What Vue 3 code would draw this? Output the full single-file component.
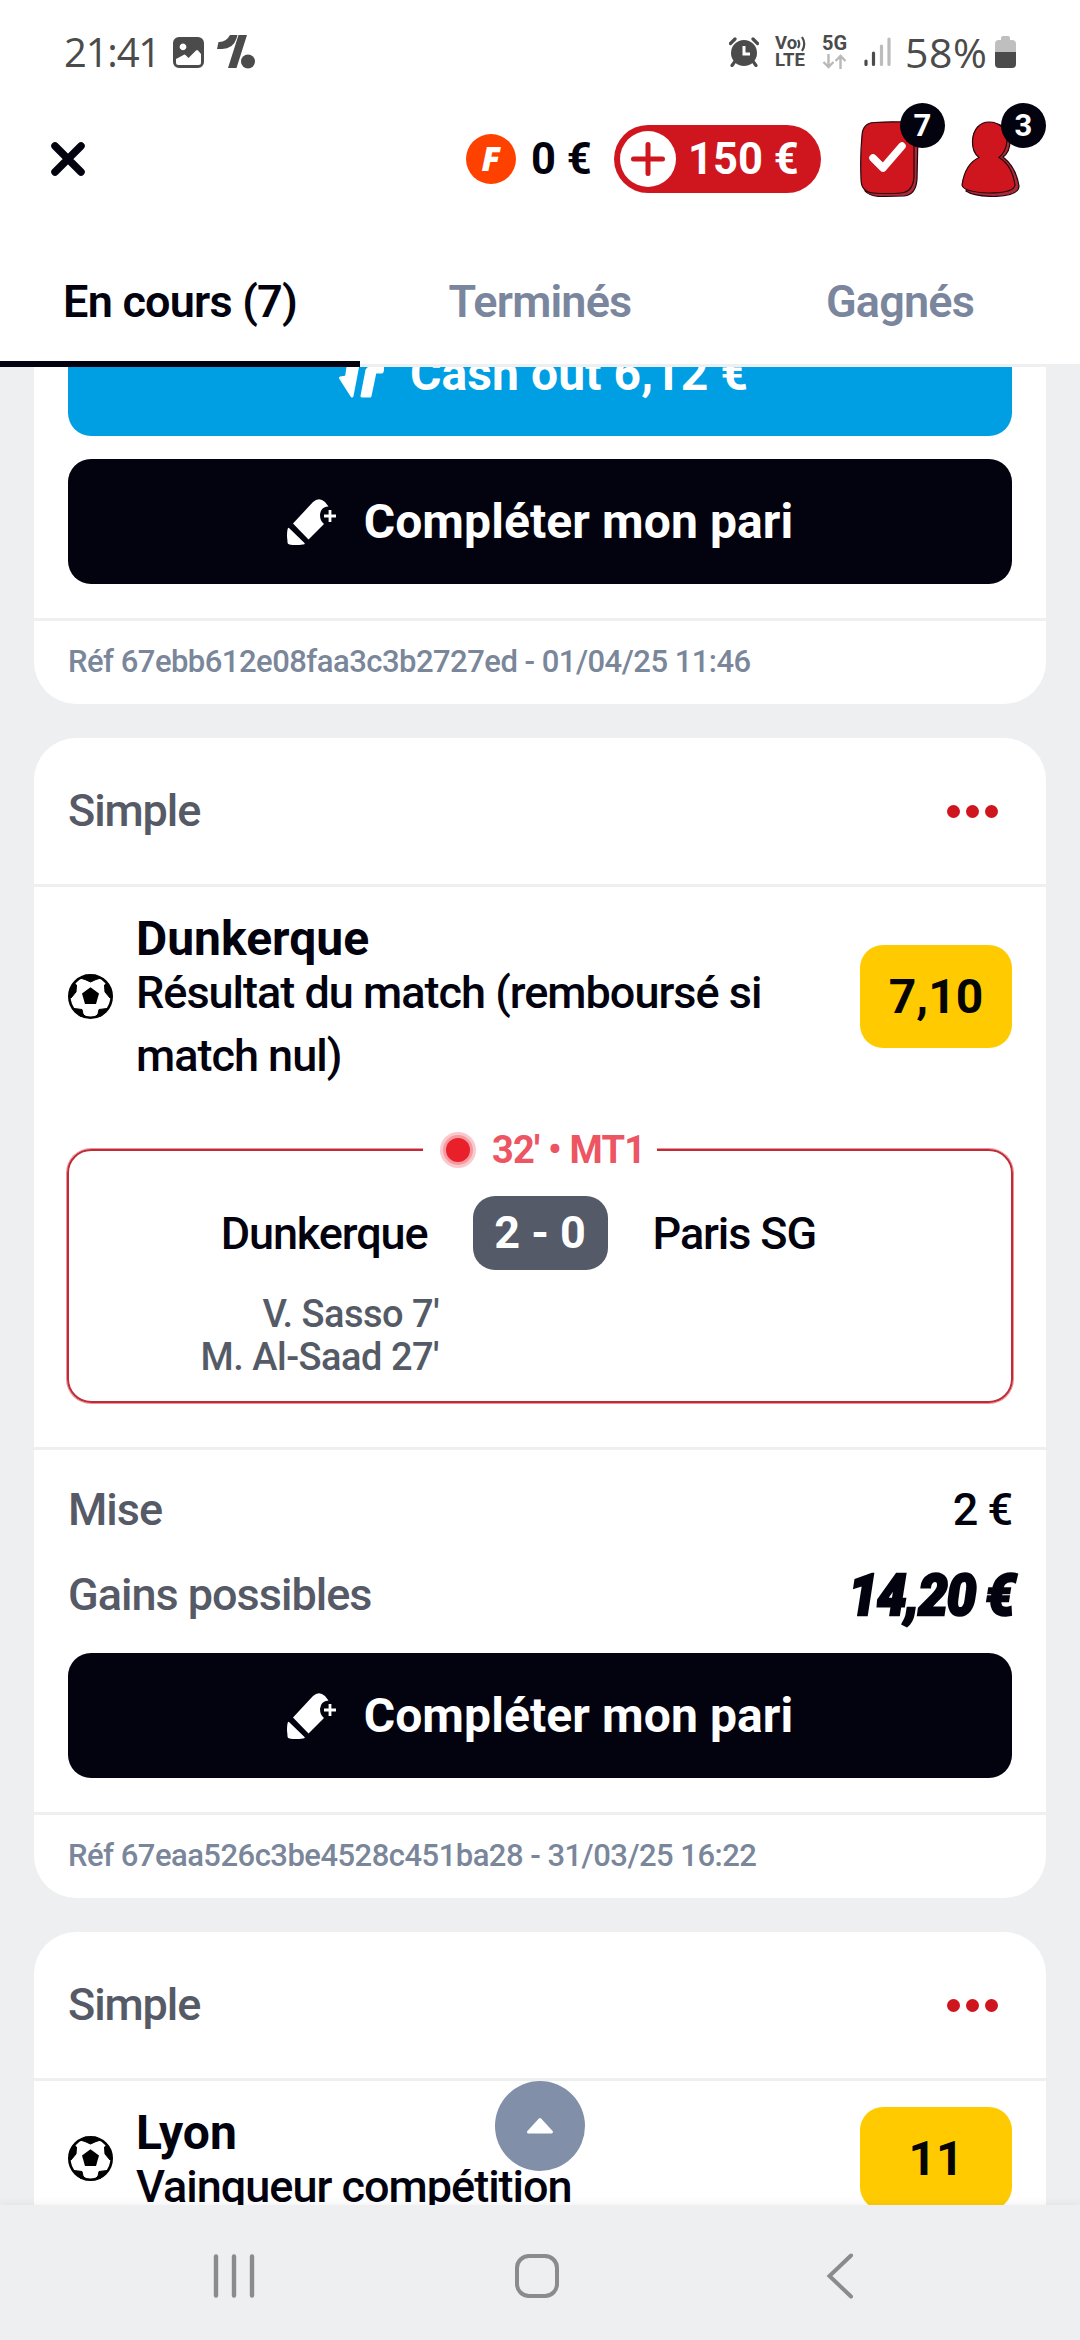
<script setup>
const tabs = [
  { label: 'En cours (7)', active: true },
  { label: 'Terminés', active: false },
  { label: 'Gagnés', active: false }
]

const bets = [
  {
    id: 1,
    tail: true,
    cashOut: 'Cash out 6,12 €',
    ref: 'Réf 67ebb612e08faa3c3b2727ed - 01/04/25 11:46'
  },
  {
    id: 2,
    type: 'Simple',
    pick: 'Dunkerque',
    market: 'Résultat du match (remboursé si match nul)',
    odds: '7,10',
    live: {
      clock: "32' • MT1",
      home: 'Dunkerque',
      away: 'Paris SG',
      score: '2 - 0',
      scorers: ["V. Sasso 7'", "M. Al-Saad 27'"]
    },
    stake: '2 €',
    gain: '14,20 €',
    ref: 'Réf 67eaa526c3be4528c451ba28 - 31/03/25 16:22'
  },
  {
    id: 3,
    type: 'Simple',
    pick: 'Lyon',
    market: 'Vainqueur compétition',
    odds: '11'
  }
]
</script>

<template>
  <div class="screen">
    <div class="status">
      <span class="time">21:41</span>
      <svg class="s-photo" width="31" height="31" viewBox="0 0 31 31">
        <path fill="#4b4b4b" fill-rule="evenodd" d="M6 0h19a6 6 0 0 1 6 6v19a6 6 0 0 1-6 6H6a6 6 0 0 1-6-6V6a6 6 0 0 1 6-6ZM10 6.500a3.400 3.400 0 1 0 .01 0ZM3 22v3.500Q3 28 5.500 28h20q2.500 0 2.500-2.500V17l-3-3.400q-1-1-2 0L15.500 21l-3-3q-1-1-2 0Z" />
      </svg>
      <svg class="s-logo" width="38" height="34" viewBox="0 0 38 34">
        <path fill="#4b4b4b" d="M0 14 1.500 7Q9 7.500 13 0h7.500l-1 3.500Q16 14 5 14ZM21.500 0H30L19.500 33H11Z" />
        <circle cx="31" cy="26.500" r="7" fill="#4b4b4b" />
      </svg>
      <span class="spacer"></span>
      <svg class="s-alarm" width="30" height="30" viewBox="0 0 30 30">
        <circle cx="15" cy="16" r="13" fill="#4b4b4b" />
        <path d="M1.500 6.500 6 2M28.500 6.500 24 2M5.500 25 3 28.500M24.500 25l2.500 3.500" stroke="#4b4b4b" stroke-width="3.200" stroke-linecap="round" />
        <path d="M15 9v8h6" fill="none" stroke="#fff" stroke-width="3" />
      </svg>
      <div class="volte">
        <span>Vo<svg width="11" height="16" viewBox="0 0 11 16"><path d="M1 4q2.500 4 0 8M5 1q4.500 7 0 14" fill="none" stroke="#4b4b4b" stroke-width="2.200" /></svg></span>
        <span>LTE</span>
      </div>
      <div class="fiveg">
        <span>5G</span>
        <svg width="25" height="15" viewBox="0 0 25 15">
          <path d="M6.500 0v13M1.500 8l5 5 5-5M18.500 15V2M13.500 7l5-5 5 5" fill="none" stroke="#b9b9b9" stroke-width="2.400" />
        </svg>
      </div>
      <svg class="s-signal" width="27" height="30" viewBox="0 0 27 30">
        <g stroke-width="3.200" stroke-linecap="round">
          <path d="M2 24v3.500M9.500 16v11.500" stroke="#4b4b4b" />
          <path d="M17.500 9v18.500M25 2v25.500" stroke="#bcbcbc" />
        </g>
      </svg>
      <span class="pct">58%</span>
      <svg class="s-batt" width="21" height="32" viewBox="0 0 21 32">
        <path fill="#bfbfbf" d="M8 0h5q2 0 2 2v2h2q4 0 4 4v9H0V8q0-4 4-4h2V2q0-2 2-2Z" />
        <path fill="#4b4b4b" d="M0 16h21v12q0 4-4 4H4q-4 0-4-4Z" />
      </svg>
    </div>

    <header class="header">
      <svg width="34" height="34" viewBox="0 0 34 34">
        <path d="M4 4l26 26M30 4 4 30" stroke="#03030f" stroke-width="7.500" stroke-linecap="round" />
      </svg>
      <span class="spacer"></span>
      <span class="freebet">F</span>
      <span class="free-amount">0 €</span>
      <div class="wallet">
        <span class="plus">
          <svg width="34" height="34" viewBox="0 0 34 34">
            <path d="M17 2.500v29M2.500 17h29" stroke="#cf161e" stroke-width="5" stroke-linecap="round" />
          </svg>
        </span>
        <span>150 €</span>
      </div>
      <div class="hicon bets">
        <svg width="59" height="76" viewBox="0 0 59 76">
          <path d="M12 2 43 1Q58 1 58 14L57 58Q56 74 44 75L20 75.500Q9 75 5 70Z" fill="#a92a38" stroke="#25060c" stroke-width="1.200" />
          <path d="M14 1.500Q28 .5 42 1 54 2 54 14V56Q53 71 41 72 27 73 13 72 1 71 1 58 0 36 2 14 3 2 14 1.500Z" fill="#cf161e" stroke="#25060c" stroke-width="1.200" />
          <path d="M13 37l10 10 19-22" fill="none" stroke="#fff" stroke-width="7.500" stroke-linecap="round" stroke-linejoin="round" />
        </svg>
        <span class="badge">7</span>
      </div>
      <div class="hicon person">
        <svg width="59" height="76" viewBox="0 0 59 76">
          <path d="M33 2Q49 5 49 20 49 31 42 36 55 46 58 65 58 75 32 75.500 12 75 5 70Z" fill="#a92a38" stroke="#25060c" stroke-width="1.200" />
          <path d="M28 1C39 1 46 9 46 20Q45 31 38 36.500 51 44 54 64 53 72 28 72 2 71 1 64 4 43 18 36.500 11 31 11.500 20C12 8 19 1 28 1Z" fill="#cf161e" stroke="#25060c" stroke-width="1.200" />
        </svg>
        <span class="badge">3</span>
      </div>
    </header>

    <nav class="tabs">
      <span v-for="t in tabs" :key="t.label" class="tab" :class="{ active: t.active }">{{ t.label }}</span>
    </nav>

    <main class="list">
      <section v-for="b in bets" :key="b.id" class="card" :class="{ tail: b.tail }">
        <div v-if="b.type" class="card-head">
          <span>{{ b.type }}</span>
          <span class="dots"><i></i><i></i><i></i></span>
        </div>

        <div v-if="b.pick" class="selection">
          <svg class="ball" width="45" height="45" viewBox="0 0 45 45">
            <circle cx="22.500" cy="22.500" r="21.200" fill="#fff" stroke="#000" stroke-width="2.600" />
            <path d="M22.500 13.200 31 19.500 28 30H17l-3-10.500Z" />
            <path d="M12 4 17 5.500 22.500 8 28 5.500 33 4 28 1H17ZM6 9.500 8.500 11 8 18 3 24 1 22ZM39 9.500 36.500 11 37 18 42 24 44 22ZM6 34.500 14 35.500 15 40 18.500 43.500 12 42ZM39 34.500 31 35.500 30 40 26.500 43.500 33 42Z" stroke="#000" stroke-linejoin="round" />
          </svg>
          <div class="sel-text">
            <strong>{{ b.pick }}</strong>
            <p>{{ b.market }}</p>
          </div>
          <span class="odds">{{ b.odds }}</span>
        </div>

        <div v-if="b.live" class="live">
          <div class="live-label"><i class="pulse"></i><span>{{ b.live.clock }}</span></div>
          <div class="teams">
            <span class="home">{{ b.live.home }}</span>
            <span class="score">{{ b.live.score }}</span>
            <span>{{ b.live.away }}</span>
          </div>
          <div class="scorers">
            <span v-for="s in b.live.scorers" :key="s">{{ s }}</span>
          </div>
        </div>

        <div v-if="b.stake" class="money">
          <div class="row"><span class="label">Mise</span><span>{{ b.stake }}</span></div>
          <div class="row"><span class="label">Gains possibles</span><span class="gain">{{ b.gain }}</span></div>
        </div>

        <div v-if="b.ref" class="actions">
          <button v-if="b.cashOut" class="btn cash">
            <svg width="45" height="48" viewBox="1 0 45 48">
              <path fill="#fff" stroke="#fff" stroke-width="3" stroke-linejoin="round" d="M12 4h10l-8 42L2.500 28l6-1ZM29 20 24 46h8l5-24h7l1-4H31Z" />
            </svg>
            <span>{{ b.cashOut }}</span>
          </button>
          <button class="btn">
            <svg width="49" height="46" viewBox="0 0 49 46">
              <path fill="#fff" d="M6 24.500 26 3Q32-2.500 38 3L41.500 7.500Q33.500 8 33 16 33 22 37 25L21.500 40.500ZM2 29 17.500 44Q18.500 45.500 16 45.500 8 46.500 2.500 45.500 0 45 .5 42-.5 36 .5 30.500 1 28 2 29Z" />
              <path d="M43 11v12M37 17h12" stroke="#fff" stroke-width="2.800" />
            </svg>
            <span>Compléter mon pari</span>
          </button>
        </div>
        <div v-if="b.ref" class="ref">{{ b.ref }}</div>
      </section>
    </main>

    <button class="to-top">
      <svg width="28" height="18" viewBox="0 0 28 18">
        <path d="M14 2.500 25.500 15h-23Z" fill="#fff" stroke="#fff" stroke-width="3" stroke-linejoin="round" />
      </svg>
    </button>

    <footer class="sysnav">
      <svg width="42" height="44" viewBox="0 0 42 44">
        <path d="M3 2.500v39M21 2.500v39M39 2.500v39" stroke="#8b8b8b" stroke-width="4.400" stroke-linecap="round" />
      </svg>
      <svg class="home-key" width="46" height="46" viewBox="0 0 46 46">
        <rect x="3" y="3" width="40" height="40" rx="12" fill="none" stroke="#8b8b8b" stroke-width="4" />
      </svg>
      <svg width="28" height="46" viewBox="0 0 28 46">
        <path d="M25 2.500 3.500 23 25 43.500" fill="none" stroke="#8b8b8b" stroke-width="4" stroke-linecap="round" />
      </svg>
    </footer>
  </div>
</template>

<style>
body {
  margin: 0;
  background: #edeff1;
}
</style>

<style scoped>
.screen {
  position: relative;
  display: flex;
  flex-direction: column;
  width: 1080px;
  height: 2340px;
  overflow: hidden;
  background: #edeff1;
  font-family: Roboto, 'Noto Sans', sans-serif;
  font-size: 45px;
  color: #03030f;
}
svg {
  display: block;
  flex: none;
}
.spacer {
  flex: 1;
}

/* Status bar */
.status {
  display: flex;
  align-items: center;
  box-sizing: border-box;
  height: 104px;
  padding: 0 64px;
  background: #fff;
  color: #4b4b4b;
}
.time {
  width: 109px;
  font: 400 40px/48px 'Open Sans', sans-serif;
  letter-spacing: -1.2px;
}
.s-logo {
  margin-left: 13px;
}
.volte {
  display: flex;
  flex-direction: column;
  width: 32px;
  margin-left: 16px;
  font-size: 18.5px;
  font-weight: 700;
  line-height: 17px;
}
.volte span {
  display: flex;
  align-items: center;
}
.fiveg {
  display: flex;
  flex-direction: column;
  gap: 2px;
  width: 26px;
  margin-left: 15px;
  font-size: 20px;
  font-weight: 700;
  line-height: 17px;
}
.s-signal {
  margin-left: 16px;
}
.pct {
  width: 90px;
  padding-left: 14px;
  font: 400 41px/48px 'Open Sans', sans-serif;
  letter-spacing: 0.6px;
}

/* App header */
.header {
  display: flex;
  align-items: center;
  box-sizing: border-box;
  height: 136px;
  padding: 0 61px 26px 51px;
  background: #fff;
  font-size: 43.5px;
  font-weight: 700;
}
.freebet {
  width: 50px;
  height: 50px;
  border-radius: 50%;
  background: #ff4100;
  color: #fff;
  font: italic 800 33px/50px 'Open Sans', sans-serif;
  text-align: center;
}
.free-amount {
  width: 61px;
  margin-left: 15px;
  white-space: nowrap;
}
.wallet {
  display: flex;
  align-items: center;
  gap: 12px;
  box-sizing: border-box;
  width: 207px;
  height: 68px;
  margin-left: 22px;
  padding-left: 6px;
  border-radius: 34px;
  background: #cf161e;
  color: #fff;
  white-space: nowrap;
}
.plus {
  display: flex;
  align-items: center;
  justify-content: center;
  width: 56px;
  height: 56px;
  border-radius: 50%;
  background: #fff;
}
.hicon {
  position: relative;
  width: 58px;
}
.bets {
  margin-left: 39px;
}
.person {
  margin-left: 43px;
}
.badge {
  position: absolute;
  top: -18px;
  right: -27px;
  width: 45px;
  height: 45px;
  border-radius: 50%;
  background: #03030f;
  color: #fff;
  font-size: 31px;
  line-height: 45px;
  text-align: center;
}

/* Tabs */
.tabs {
  display: flex;
  height: 127px;
  background: #fff;
  box-shadow: inset 0 -3px #edeff1;
}
.tab {
  flex: 1;
  box-sizing: border-box;
  color: #7a869e;
  font-weight: 600;
  line-height: 124px;
  letter-spacing: -0.8px;
  text-align: center;
}
.tab.active {
  border-bottom: 6px solid #03030f;
  color: #03030f;
}

/* Bet list */
.list {
  display: flex;
  flex: 1;
  flex-direction: column;
  gap: 34px;
  min-height: 0;
  overflow: hidden;
  padding: 0 34px;
}
.card {
  flex: none;
  border-radius: 42px;
  background: #fff;
}
.card.tail {
  margin-top: -56px;
}
.card:last-child {
  padding-bottom: 60px;
}
.card-head {
  display: flex;
  align-items: center;
  justify-content: space-between;
  height: 146px;
  padding: 0 48px 0 34px;
  border-bottom: 3px solid #edeff1;
  color: #555a66;
  font-weight: 500;
  line-height: 52px;
  letter-spacing: -1.1px;
}
.dots {
  display: flex;
  gap: 6px;
}
.dots i {
  width: 13px;
  height: 13px;
  border-radius: 50%;
  background: #cf161e;
}
.selection {
  display: flex;
  align-items: center;
  padding: 19px 34px 0;
}
.sel-text {
  width: 660px;
  margin-left: 23px;
}
.sel-text strong {
  display: block;
  padding-top: 11px;
  font-size: 48px;
  font-weight: 700;
  line-height: 44px;
}
.sel-text p {
  margin: 0 0 -1px;
  font-weight: 500;
  line-height: 63px;
  letter-spacing: -1px;
}
.odds {
  width: 152px;
  height: 103px;
  margin-left: auto;
  border-radius: 23px;
  background: #ffcb00;
  color: #050505;
  font-size: 48px;
  font-weight: 700;
  line-height: 103px;
  text-align: center;
}
.live {
  position: relative;
  box-sizing: border-box;
  height: 254px;
  margin: 63px 33px 44px;
  padding-top: 45px;
  border: 2px solid #bd2d38;
  border-radius: 24px;
  box-shadow: 0 0 0 1px #ee9298;
}
.live-label {
  position: absolute;
  top: -25px;
  left: 354px;
  display: flex;
  align-items: center;
  box-sizing: border-box;
  width: 234px;
  height: 48px;
  padding-left: 23px;
  background: #fff;
  color: #ec5561;
  font-size: 38px;
  font-weight: 700;
  letter-spacing: -0.8px;
  white-space: nowrap;
}
.pulse {
  width: 24px;
  height: 24px;
  margin-right: 22px;
  border-radius: 50%;
  background: #e91f2a;
  box-shadow: 0 0 0 3px #f59aa0, 0 0 0 6px #fac9cd;
}
.teams {
  display: grid;
  grid-template-columns: 1fr 135px 1fr;
  gap: 45px;
  align-items: center;
  font-weight: 500;
  letter-spacing: -1.1px;
}
.home {
  text-align: right;
}
.score {
  height: 74px;
  border-radius: 22px;
  background: #555a68;
  color: #fff;
  font-weight: 700;
  letter-spacing: 0;
  line-height: 74px;
  text-align: center;
}
.scorers {
  display: flex;
  flex-direction: column;
  width: 370px;
  margin-top: 23px;
  color: #555b66;
  font-size: 38px;
  font-weight: 500;
  line-height: 43px;
  letter-spacing: -0.5px;
  text-align: right;
}
.money {
  padding: 17px 34px 16px;
  border-top: 3px solid #edeff1;
}
.row {
  display: flex;
  align-items: center;
  justify-content: space-between;
  height: 85px;
  font-weight: 500;
  letter-spacing: -1px;
}
.label {
  color: #555a66;
}
.gain {
  margin-right: -2px;
  font-size: 58px;
  font-style: italic;
  font-weight: 900;
  letter-spacing: -1.2px;
  word-spacing: -2px;
  -webkit-text-stroke: 2.5px #03030f;
  transform: scaleX(0.91);
  transform-origin: right center;
}
.actions {
  display: flex;
  flex-direction: column;
  gap: 23px;
  padding: 0 34px 34px;
}
.btn {
  display: flex;
  align-items: center;
  justify-content: center;
  gap: 28px;
  height: 125px;
  padding: 0;
  border: 0;
  border-radius: 23px;
  background: #03030f;
  color: #fff;
  font: 700 48px/56px Roboto, sans-serif;
  letter-spacing: 0.1px;
}
.cash {
  box-sizing: border-box;
  gap: 26px;
  padding-left: 7px;
  background: #009fe3;
}
.ref {
  height: 83px;
  padding: 0 34px;
  border-top: 3px solid #edeff1;
  color: #7a869a;
  font-size: 31px;
  font-weight: 500;
  line-height: 82px;
  letter-spacing: -0.52px;
}

/* Floating button */
.to-top {
  position: absolute;
  top: 2081px;
  left: 495px;
  display: flex;
  align-items: center;
  justify-content: center;
  width: 90px;
  height: 90px;
  padding: 0;
  border: 0;
  border-radius: 50%;
  background: #8190a8;
}

/* System navigation */
.sysnav {
  position: relative;
  display: flex;
  align-items: center;
  box-sizing: border-box;
  height: 135px;
  padding: 7px 226px 0 213px;
  justify-content: space-between;
  background: #edeff1;
  box-shadow: 0 -2px 8px rgba(0, 0, 0, 0.05);
}
.home-key {
  margin-right: 8px;
}
</style>
